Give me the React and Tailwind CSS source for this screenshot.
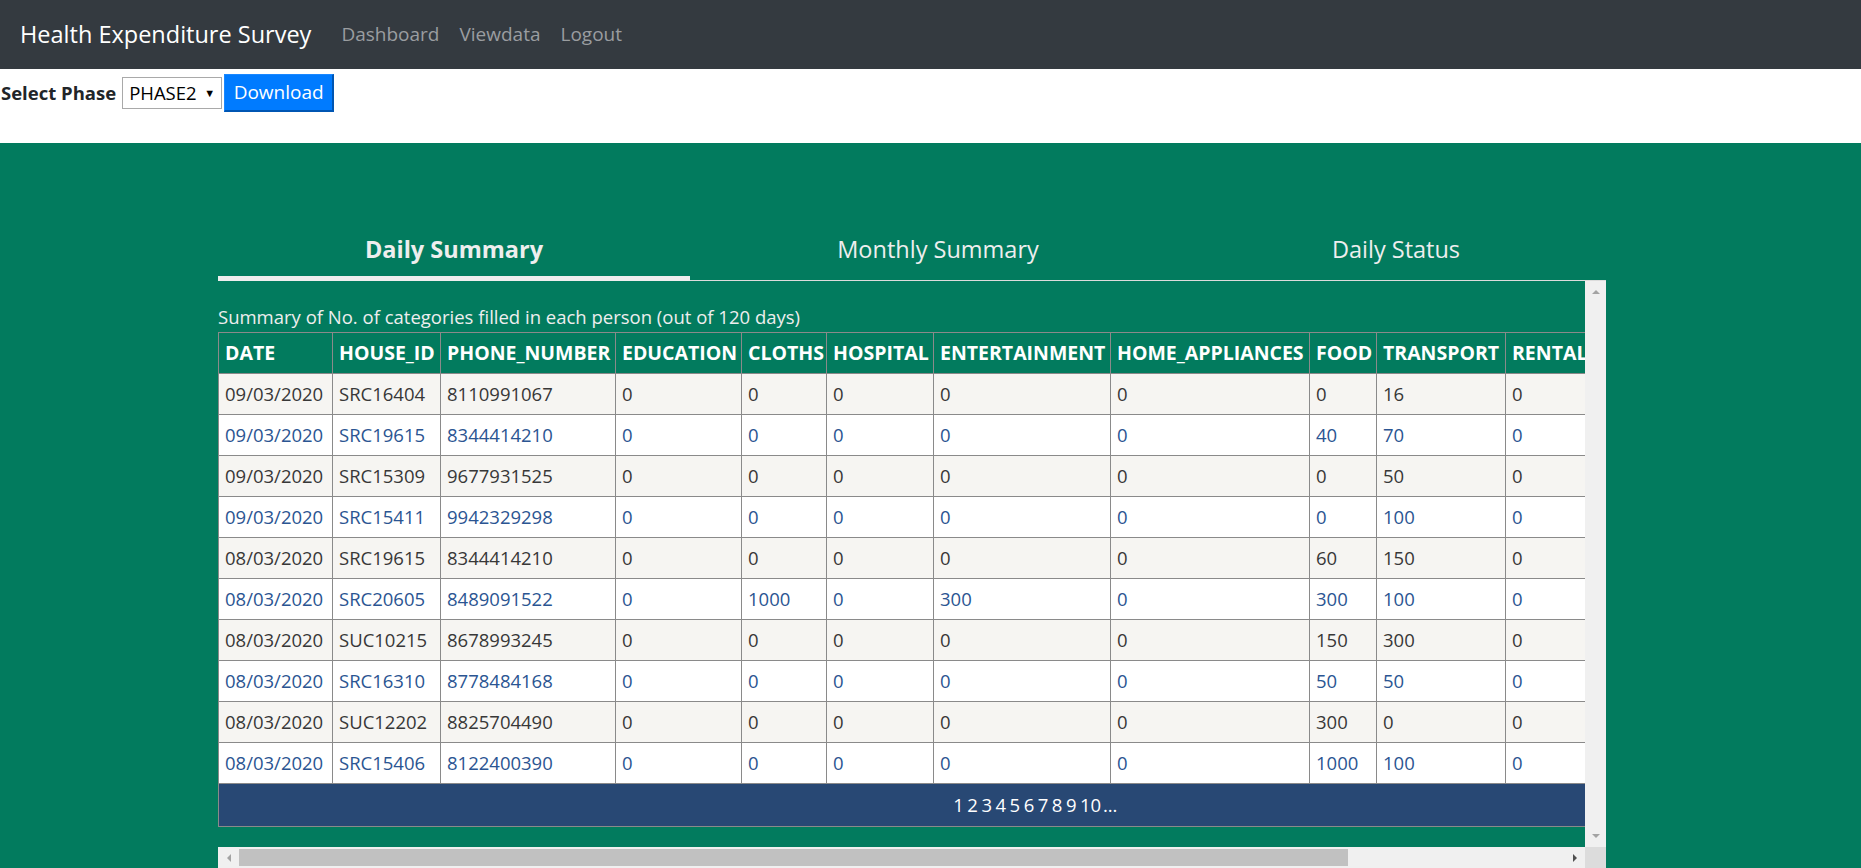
import React from "react";

const columns = [
  { label: "DATE", w: "w-[114px]" },
  { label: "HOUSE_ID", w: "w-[108px]" },
  { label: "PHONE_NUMBER", w: "w-[175px]" },
  { label: "EDUCATION", w: "w-[126px]" },
  { label: "CLOTHS", w: "w-[85px]" },
  { label: "HOSPITAL", w: "w-[107px]" },
  { label: "ENTERTAINMENT", w: "w-[177px]" },
  { label: "HOME_APPLIANCES", w: "w-[199px]" },
  { label: "FOOD", w: "w-[67px]" },
  { label: "TRANSPORT", w: "w-[129px]" },
  { label: "RENTAL", w: "w-[345px]" },
];

const rows = [
  ["09/03/2020", "SRC16404", "8110991067", "0", "0", "0", "0", "0", "0", "16", "0"],
  ["09/03/2020", "SRC19615", "8344414210", "0", "0", "0", "0", "0", "40", "70", "0"],
  ["09/03/2020", "SRC15309", "9677931525", "0", "0", "0", "0", "0", "0", "50", "0"],
  ["09/03/2020", "SRC15411", "9942329298", "0", "0", "0", "0", "0", "0", "100", "0"],
  ["08/03/2020", "SRC19615", "8344414210", "0", "0", "0", "0", "0", "60", "150", "0"],
  ["08/03/2020", "SRC20605", "8489091522", "0", "1000", "0", "300", "0", "300", "100", "0"],
  ["08/03/2020", "SUC10215", "8678993245", "0", "0", "0", "0", "0", "150", "300", "0"],
  ["08/03/2020", "SRC16310", "8778484168", "0", "0", "0", "0", "0", "50", "50", "0"],
  ["08/03/2020", "SUC12202", "8825704490", "0", "0", "0", "0", "0", "300", "0", "0"],
  ["08/03/2020", "SRC15406", "8122400390", "0", "0", "0", "0", "0", "1000", "100", "0"],
];

const tabs = [
  { label: "Daily Summary", w: "w-[472px]", active: true },
  { label: "Monthly Summary", w: "w-[496px]", active: false },
  { label: "Daily Status", w: "flex-1", active: false },
];

const pages = ["1", "2", "3", "4", "5", "6", "7", "8", "9", "10"];

const Arrow = ({ dir, color }) => {
  const pts = {
    up: "1,7 5,3 9,7",
    down: "1,3 5,7 9,3",
    left: "7,1 3,5 7,9",
    right: "3,1 7,5 3,9",
  };
  return (
    <svg width="10" height="10" viewBox="0 0 10 10">
      <polygon points={pts[dir]} fill={color} />
    </svg>
  );
};

const App = () => {
  return (
    <div className="min-h-screen bg-[#027b5e] font-['Open_Sans',sans-serif]">
      {/* navbar */}
      <nav className="h-[69px] bg-[#343a40] flex items-center px-[20px]">
        <span className="text-white text-[23.5px] mr-[20px]">
          Health Expenditure Survey
        </span>
        <a className="text-[#9a9da0] text-[19px] px-[10px]">Dashboard</a>
        <a className="text-[#9a9da0] text-[19px] px-[10px]">Viewdata</a>
        <a className="text-[#9a9da0] text-[19px] px-[10px]">Logout</a>
      </nav>

      {/* phase select */}
      <div className="h-[74px] bg-white pt-[5px]">
        <div className="flex items-center h-[38px]">
          <span className="font-bold text-[18.5px] text-[#212529] pl-[1px] mr-[6px]">
            Select Phase
          </span>
          <div className="w-[100px] h-[32px] border border-[#a9a9a9] bg-white flex items-center justify-between px-[6px] text-[18.5px] text-black">
            <span>PHASE2</span>
            <span className="text-[11px]">▼</span>
          </div>
          <button className="ml-[2px] w-[110px] h-[38px] bg-[#007bff] text-white text-[19px] border-t border-l border-[#1a88ff] border-r-2 border-b-2 border-r-[#0056b3] border-b-[#0056b3]">
            Download
          </button>
        </div>
      </div>

      {/* green section */}
      <div className="pt-[89px] pl-[218px]">
        <div className="w-[1388px]">
          {/* tabs */}
          <div className="flex">
            {tabs.map((t) => (
              <div key={t.label} className={`${t.w} h-[49px] flex flex-col`}>
                <div
                  className={`h-[44px] pb-[8px] flex items-center justify-center text-[23.5px] text-[#eeeeee] ${
                    t.active ? "font-bold" : ""
                  }`}
                >
                  {t.label}
                </div>
                <div
                  className={`mt-auto ${
                    t.active ? "h-[5px] bg-[#eeeeee]" : "h-px bg-[#dcdcdc]"
                  }`}
                ></div>
              </div>
            ))}
          </div>

          {/* scroll view */}
          <div className="h-[587px] flex flex-col">
            <div className="flex h-[566px]">
              <div className="w-[1367px] overflow-hidden pt-[20px]">
                <div className="h-[31px] leading-[31px] text-[18.5px] text-[#eeeeee] whitespace-nowrap">
                  Summary of No. of categories filled in each person (out of 120 days)
                </div>
                <table className="table-fixed border-collapse w-[1632px]">
                  <colgroup>
                    {columns.map((c) => (
                      <col key={c.label} className={c.w} />
                    ))}
                  </colgroup>
                  <thead>
                    <tr>
                      {columns.map((c) => (
                        <th
                          key={c.label}
                          className="h-[41px] border border-[#8a8a8a] bg-[#027b5e] text-white text-left font-bold text-[19.5px] px-[6px] whitespace-nowrap overflow-hidden"
                        >
                          {c.label}
                        </th>
                      ))}
                    </tr>
                  </thead>
                  <tbody>
                    {rows.map((r, i) => (
                      <tr
                        key={i}
                        className={
                          i % 2 === 0
                            ? "bg-[#f6f5f2] text-[#383838]"
                            : "bg-white text-[#2b5592]"
                        }
                      >
                        {r.map((v, j) => (
                          <td
                            key={j}
                            className="h-[41px] border border-[#8a8a8a] px-[6px] text-[18.5px] whitespace-nowrap overflow-hidden"
                          >
                            {v}
                          </td>
                        ))}
                      </tr>
                    ))}
                  </tbody>
                  <tfoot>
                    <tr>
                      <td
                        colSpan={columns.length}
                        className="h-[43px] border border-[#8a8a8a] bg-[#284874] text-white text-[18.5px] text-center"
                      >
                        {pages.map((p) => (
                          <span key={p} className="mx-[1.75px]">
                            {p}
                          </span>
                        ))}
                        <span>...</span>
                      </td>
                    </tr>
                  </tfoot>
                </table>
              </div>
              {/* vertical scrollbar */}
              <div className="w-[21px] bg-[#f0f0f0] flex flex-col items-center justify-between py-[6px]">
                <Arrow dir="up" color="#a3a3a3" />
                <Arrow dir="down" color="#a3a3a3" />
              </div>
            </div>
            {/* horizontal scrollbar */}
            <div className="flex h-[21px]">
              <div className="w-[1367px] bg-[#f0f0f0] flex items-center">
                <div className="w-[21px] flex justify-center">
                  <Arrow dir="left" color="#a3a3a3" />
                </div>
                <div className="w-[1109px] h-[17px] bg-[#c1c1c1]"></div>
                <div className="flex-1"></div>
                <div className="w-[21px] flex justify-center">
                  <Arrow dir="right" color="#505050" />
                </div>
              </div>
              <div className="w-[21px] bg-[#dcdcdc]"></div>
            </div>
          </div>
        </div>
      </div>
    </div>
  );
};

export default App;
